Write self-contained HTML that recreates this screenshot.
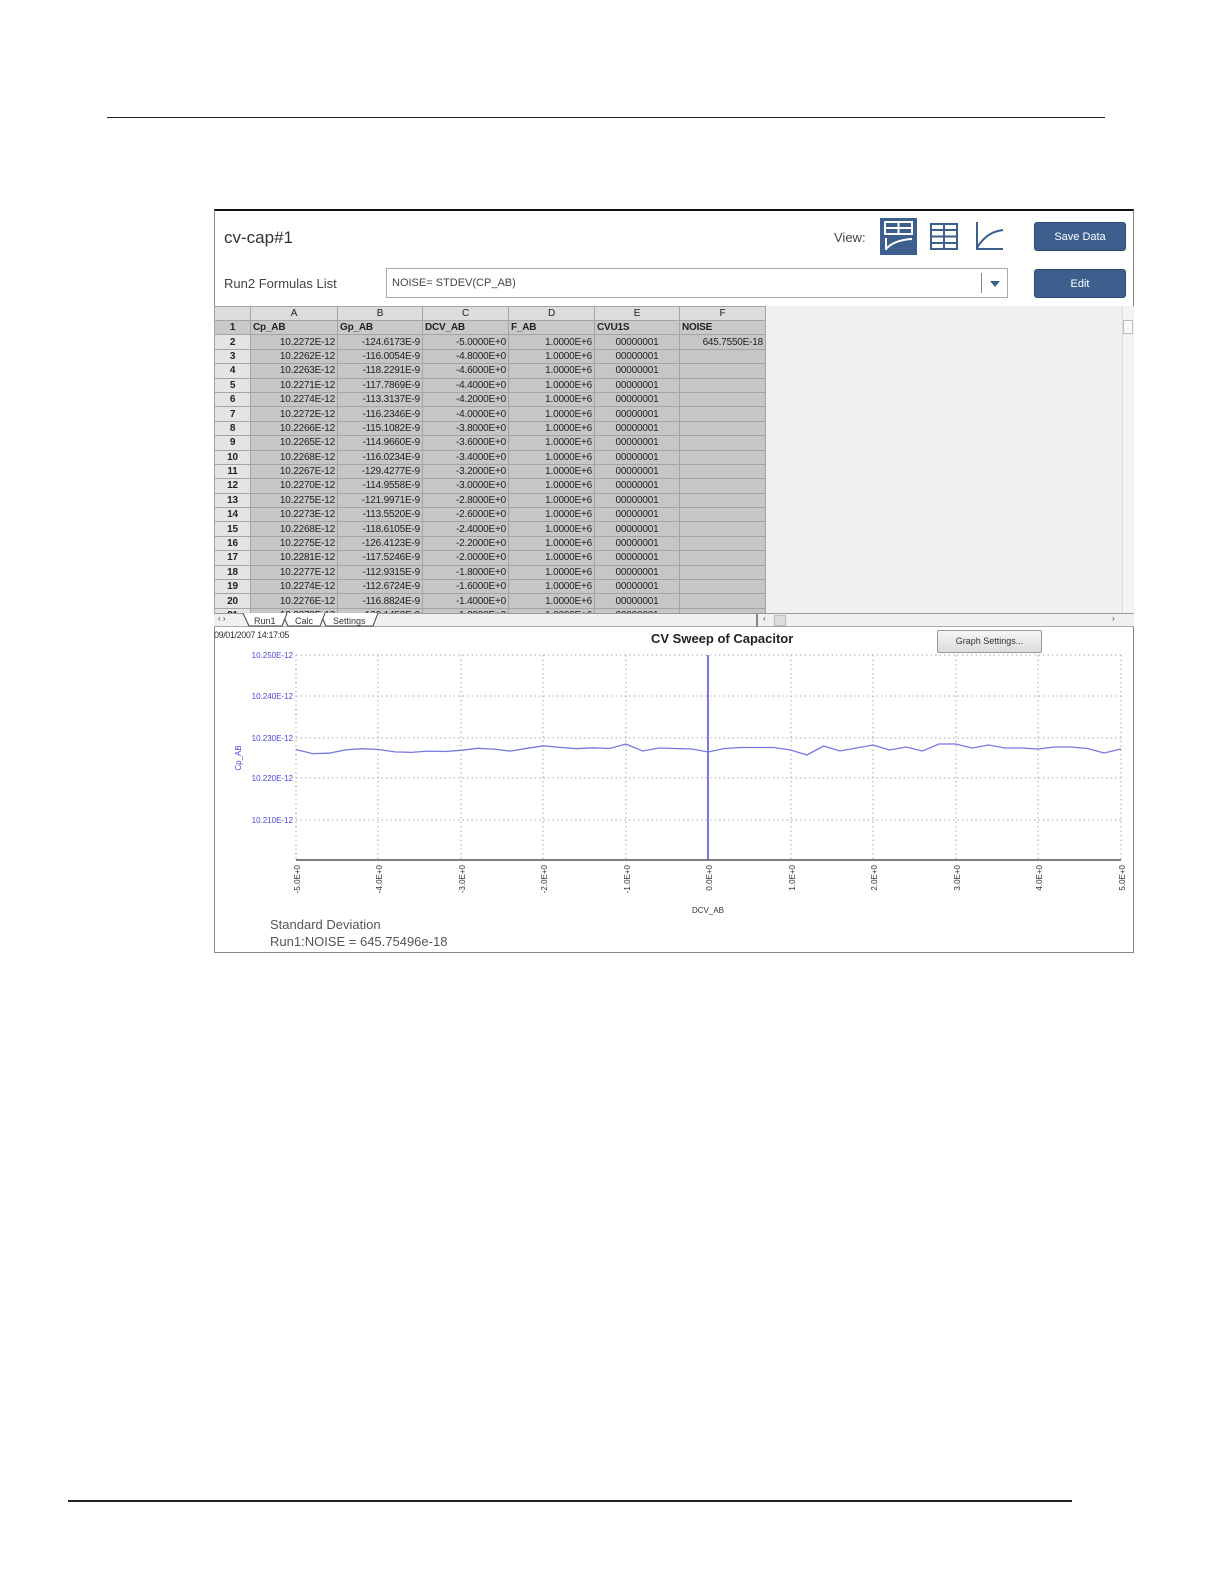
<!DOCTYPE html>
<html><head><meta charset="utf-8"><style>
*{margin:0;padding:0;box-sizing:border-box}
body{width:1224px;height:1584px;background:#fff;position:relative;font-family:"Liberation Sans",sans-serif;overflow:hidden}
.a{position:absolute}
.hl{position:absolute;height:1px;background:#222}
#panel{left:214px;top:209px;width:920px;height:744px;border:1px solid #888;border-top:2px solid #111;background:#fff}
.btn{position:absolute;background:#3d5f8e;color:#fff;font-size:11px;text-align:center;line-height:28px;border-radius:3px;border:1px solid #2d4a72}
table{border-collapse:collapse;table-layout:fixed;position:absolute;left:214px;top:306px}
td{height:14.4px;font-size:10px;line-height:13px;border:1px solid #a4a4a4;padding:0 2px;white-space:nowrap;overflow:hidden;color:#222;background:#c6c6c6;letter-spacing:-0.2px}
tr.h td{background:#dcdcdc;text-align:center;height:14px}
td.n{background:#e4e4e4;text-align:center;font-weight:bold}
tr.f td{font-weight:bold;background:#c9c9c9}
td.r{text-align:right}
td.c{text-align:center}
</style></head><body>
<div class="hl" style="left:107px;top:117px;width:998px"></div>
<div class="hl" style="left:68px;top:1500px;width:1004px;height:2px"></div>

<div class="a" id="panel"></div>
<div class="a" style="left:224px;top:228px;font-size:17px;color:#333">cv-cap#1</div>
<div class="a" style="left:834px;top:230px;font-size:13px;color:#444">View:</div>
<div class="a" style="left:880px;top:218px;width:37px;height:37px;background:#3d5f8e"></div>
<svg class="a" style="left:880px;top:218px" width="130" height="37">
<g fill="none" stroke="#fff" stroke-width="2"><rect x="5" y="4" width="27" height="12"/><line x1="18.5" y1="4" x2="18.5" y2="16"/><line x1="5" y1="10" x2="32" y2="10"/><path d="M6 32 V20 M6 31 Q14 22 32 21"/></g>
<g fill="none" stroke="#3d5f8e" stroke-width="2"><rect x="51" y="6" width="26" height="25"/><line x1="64" y1="6" x2="64" y2="31"/><line x1="51" y1="12" x2="77" y2="12"/><line x1="51" y1="18.5" x2="77" y2="18.5"/><line x1="51" y1="25" x2="77" y2="25"/>
<path d="M97 4 V31 H123 M97 30 Q106 14 123 12"/></g></svg>
<div class="btn" style="left:1034px;top:222px;width:92px;height:29px">Save Data</div>
<div class="btn" style="left:1034px;top:269px;width:92px;height:29px">Edit</div>
<div class="a" style="left:224px;top:276px;font-size:13px;color:#444">Run2 Formulas List</div>
<div class="a" style="left:386px;top:268px;width:622px;height:30px;border:1px solid #aaa;background:#fff"></div>
<div class="a" style="left:392px;top:277px;font-size:11px;color:#444">NOISE= STDEV(CP_AB)</div>
<div class="a" style="left:981px;top:273px;width:1px;height:20px;background:#888"></div>
<div class="a" style="left:990px;top:281px;width:0;height:0;border-left:5px solid transparent;border-right:5px solid transparent;border-top:6px solid #3d5f8e"></div>

<div class="a" style="left:214px;top:306px;width:908px;height:307px;background:#f0f0f0"></div>
<div class="a" style="left:1122px;top:306px;width:12px;height:307px;background:#f4f4f4;border-left:1px solid #ddd"></div>
<div class="a" style="left:1123px;top:320px;width:10px;height:14px;border:1px solid #bbb;background:#fafafa"></div>
<div class="a" style="left:214px;top:306px;width:552px;height:307px;overflow:hidden">
<table style="left:0;top:0">
<colgroup><col style="width:36px"><col style="width:87px"><col style="width:85px"><col style="width:86px"><col style="width:86px"><col style="width:85px"><col style="width:86px"></colgroup>
<tr class="h"><td></td><td>A</td><td>B</td><td>C</td><td>D</td><td>E</td><td>F</td></tr>
<tr class="f"><td class="n">1</td><td>Cp_AB</td><td>Gp_AB</td><td>DCV_AB</td><td>F_AB</td><td>CVU1S</td><td>NOISE</td></tr>
<tr><td class="n">2</td><td class="r">10.2272E-12</td><td class="r">-124.6173E-9</td><td class="r">-5.0000E+0</td><td class="r">1.0000E+6</td><td class="c">00000001</td><td class="r">645.7550E-18</td></tr>
<tr><td class="n">3</td><td class="r">10.2262E-12</td><td class="r">-116.0054E-9</td><td class="r">-4.8000E+0</td><td class="r">1.0000E+6</td><td class="c">00000001</td><td></td></tr>
<tr><td class="n">4</td><td class="r">10.2263E-12</td><td class="r">-118.2291E-9</td><td class="r">-4.6000E+0</td><td class="r">1.0000E+6</td><td class="c">00000001</td><td></td></tr>
<tr><td class="n">5</td><td class="r">10.2271E-12</td><td class="r">-117.7869E-9</td><td class="r">-4.4000E+0</td><td class="r">1.0000E+6</td><td class="c">00000001</td><td></td></tr>
<tr><td class="n">6</td><td class="r">10.2274E-12</td><td class="r">-113.3137E-9</td><td class="r">-4.2000E+0</td><td class="r">1.0000E+6</td><td class="c">00000001</td><td></td></tr>
<tr><td class="n">7</td><td class="r">10.2272E-12</td><td class="r">-116.2346E-9</td><td class="r">-4.0000E+0</td><td class="r">1.0000E+6</td><td class="c">00000001</td><td></td></tr>
<tr><td class="n">8</td><td class="r">10.2266E-12</td><td class="r">-115.1082E-9</td><td class="r">-3.8000E+0</td><td class="r">1.0000E+6</td><td class="c">00000001</td><td></td></tr>
<tr><td class="n">9</td><td class="r">10.2265E-12</td><td class="r">-114.9660E-9</td><td class="r">-3.6000E+0</td><td class="r">1.0000E+6</td><td class="c">00000001</td><td></td></tr>
<tr><td class="n">10</td><td class="r">10.2268E-12</td><td class="r">-116.0234E-9</td><td class="r">-3.4000E+0</td><td class="r">1.0000E+6</td><td class="c">00000001</td><td></td></tr>
<tr><td class="n">11</td><td class="r">10.2267E-12</td><td class="r">-129.4277E-9</td><td class="r">-3.2000E+0</td><td class="r">1.0000E+6</td><td class="c">00000001</td><td></td></tr>
<tr><td class="n">12</td><td class="r">10.2270E-12</td><td class="r">-114.9558E-9</td><td class="r">-3.0000E+0</td><td class="r">1.0000E+6</td><td class="c">00000001</td><td></td></tr>
<tr><td class="n">13</td><td class="r">10.2275E-12</td><td class="r">-121.9971E-9</td><td class="r">-2.8000E+0</td><td class="r">1.0000E+6</td><td class="c">00000001</td><td></td></tr>
<tr><td class="n">14</td><td class="r">10.2273E-12</td><td class="r">-113.5520E-9</td><td class="r">-2.6000E+0</td><td class="r">1.0000E+6</td><td class="c">00000001</td><td></td></tr>
<tr><td class="n">15</td><td class="r">10.2268E-12</td><td class="r">-118.6105E-9</td><td class="r">-2.4000E+0</td><td class="r">1.0000E+6</td><td class="c">00000001</td><td></td></tr>
<tr><td class="n">16</td><td class="r">10.2275E-12</td><td class="r">-126.4123E-9</td><td class="r">-2.2000E+0</td><td class="r">1.0000E+6</td><td class="c">00000001</td><td></td></tr>
<tr><td class="n">17</td><td class="r">10.2281E-12</td><td class="r">-117.5246E-9</td><td class="r">-2.0000E+0</td><td class="r">1.0000E+6</td><td class="c">00000001</td><td></td></tr>
<tr><td class="n">18</td><td class="r">10.2277E-12</td><td class="r">-112.9315E-9</td><td class="r">-1.8000E+0</td><td class="r">1.0000E+6</td><td class="c">00000001</td><td></td></tr>
<tr><td class="n">19</td><td class="r">10.2274E-12</td><td class="r">-112.6724E-9</td><td class="r">-1.6000E+0</td><td class="r">1.0000E+6</td><td class="c">00000001</td><td></td></tr>
<tr><td class="n">20</td><td class="r">10.2276E-12</td><td class="r">-116.8824E-9</td><td class="r">-1.4000E+0</td><td class="r">1.0000E+6</td><td class="c">00000001</td><td></td></tr>
<tr><td class="n">21</td><td class="r">10.2278E-12</td><td class="r">-120.1452E-9</td><td class="r">-1.2000E+0</td><td class="r">1.0000E+6</td><td class="c">00000001</td><td></td></tr>
</table></div>
<div class="a" style="left:214px;top:613px;width:920px;height:14px;background:#f0f0f0;border-top:1px solid #999;border-bottom:1px solid #aaa"></div>
<div class="a" style="left:756px;top:614px;width:2px;height:13px;background:#888"></div>
<div class="a" style="left:774px;top:615px;width:12px;height:11px;background:#ddd;border:1px solid #bbb"></div>
<div class="a" style="left:218px;top:614px;font-size:8px;color:#444">‹ ›</div>
<div class="a" style="left:763px;top:614px;font-size:8px;color:#444">‹</div>
<div class="a" style="left:1112px;top:614px;font-size:8px;color:#444">›</div>
<svg class="a" style="left:240px;top:613px" width="150" height="14"><g fill="#fff" stroke="#444" stroke-width="1"><path d="M80 0 L86 13 H133 L138 0"/><path d="M42 0 L48 13 H80 L85 0"/><path d="M3 0 L9 13 H42 L47 0"/></g>
<g font-family="Liberation Sans" font-size="9" fill="#333"><text x="14" y="11">Run1</text><text x="55" y="11">Calc</text><text x="93" y="11">Settings</text></g></svg>

<div class="a" style="left:214px;top:630px;font-size:9px;color:#333;letter-spacing:-0.4px">09/01/2007 14:17:05</div>
<div class="a" style="left:651px;top:631px;font-size:13px;font-weight:bold;color:#222">CV Sweep of Capacitor</div>
<div class="a" style="left:937px;top:630px;width:105px;height:23px;border:1px solid #999;border-radius:2px;background:linear-gradient(#f6f6f6,#dcdcdc);font-size:9px;color:#333;text-align:center;line-height:21px">Graph Settings...</div>

<svg class="a" style="left:214px;top:640px" width="920" height="310">
<g stroke="#aaa" stroke-dasharray="1.5 3" stroke-width="1">
<line x1="82" y1="15" x2="907" y2="15"/><line x1="82" y1="56" x2="907" y2="56"/><line x1="82" y1="98" x2="907" y2="98"/><line x1="82" y1="138" x2="907" y2="138"/><line x1="82" y1="180" x2="907" y2="180"/>
<line x1="82" y1="15" x2="82" y2="220"/><line x1="164" y1="15" x2="164" y2="220"/><line x1="247" y1="15" x2="247" y2="220"/><line x1="329" y1="15" x2="329" y2="220"/><line x1="412" y1="15" x2="412" y2="220"/><line x1="577" y1="15" x2="577" y2="220"/><line x1="659" y1="15" x2="659" y2="220"/><line x1="742" y1="15" x2="742" y2="220"/><line x1="824" y1="15" x2="824" y2="220"/><line x1="907" y1="15" x2="907" y2="220"/>
</g>
<line x1="82" y1="220" x2="907" y2="220" stroke="#555" stroke-width="1.5"/>
<line x1="494" y1="15" x2="494" y2="220" stroke="#4a4ae0" stroke-width="1.5"/>
<g font-family="Liberation Sans" font-size="8" fill="#4a4ad0" text-anchor="end">
<text x="79" y="18">10.250E-12</text><text x="79" y="59">10.240E-12</text><text x="79" y="101">10.230E-12</text><text x="79" y="141">10.220E-12</text><text x="79" y="183">10.210E-12</text>
<text transform="translate(27,118) rotate(-90)" text-anchor="middle">Cp_AB</text></g>
<polyline fill="none" stroke="#7777dd" stroke-width="1.3" points="82,109.5 98.5,113.6 115,113.2 131.5,109.9 148,108.7 164.5,109.5 181,111.9 197.5,112.4 214,111.1 230.5,111.5 247,110.3 263.5,108.3 280,109.1 296.5,111.1 313,108.3 329.5,105.8 346,107.4 362.5,108.7 379,107.8 395.5,108.5 412,104 428.5,111 445,108 461.5,108.5 478,109 494,112 510.5,108.5 527,107.5 543.5,107.5 560,107.5 576.5,110 593,115 609.5,106 626,111 642.5,108 659,105 675.5,110 692,107 708.5,111 725,104 741.5,104 758,108 774.5,105 791,108 807.5,108 824,109 840.5,107 857,107 873.5,108.5 890,113 907,109"/>
<g font-family="Liberation Sans" font-size="8" fill="#333">
<text transform="translate(86,225) rotate(-90)" text-anchor="end">-5.0E+0</text>
<text transform="translate(168,225) rotate(-90)" text-anchor="end">-4.0E+0</text>
<text transform="translate(251,225) rotate(-90)" text-anchor="end">-3.0E+0</text>
<text transform="translate(333,225) rotate(-90)" text-anchor="end">-2.0E+0</text>
<text transform="translate(416,225) rotate(-90)" text-anchor="end">-1.0E+0</text>
<text transform="translate(498,225) rotate(-90)" text-anchor="end">0.0E+0</text>
<text transform="translate(581,225) rotate(-90)" text-anchor="end">1.0E+0</text>
<text transform="translate(663,225) rotate(-90)" text-anchor="end">2.0E+0</text>
<text transform="translate(746,225) rotate(-90)" text-anchor="end">3.0E+0</text>
<text transform="translate(828,225) rotate(-90)" text-anchor="end">4.0E+0</text>
<text transform="translate(911,225) rotate(-90)" text-anchor="end">5.0E+0</text>
<text x="494" y="273" text-anchor="middle">DCV_AB</text></g>
</svg>
<div class="a" style="left:270px;top:916px;font-size:13px;color:#555;line-height:17px">Standard Deviation<br>Run1:NOISE = 645.75496e-18</div>
</body></html>
